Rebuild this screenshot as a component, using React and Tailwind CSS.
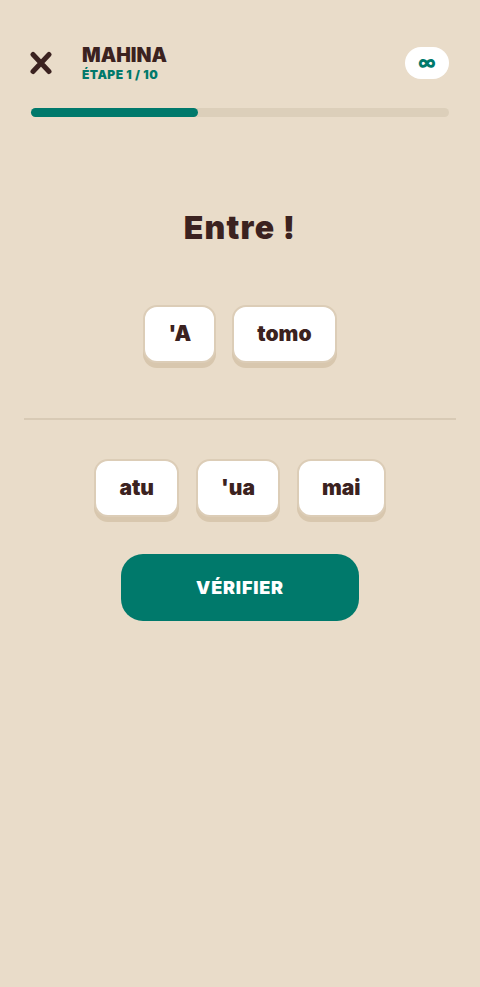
import React from "react";

function Tile({ children }) {
  return (
    <div className="rounded-[14px] border-2 border-[#dccdb7] bg-white px-[23px] h-[58px] flex items-center justify-center shadow-[0_5px_0_#d8c7ae] text-[21px] font-black text-[#3b2220]">
      {children}
    </div>
  );
}

export default function App() {
  return (
    <div className="min-h-[987px] w-full bg-[#e9dcc9] pt-[47px] font-['Inter',sans-serif]">
      <div className="flex h-8 items-center justify-between px-[30px]">
        <div className="flex items-center">
          <svg width="22" height="24" viewBox="0 0 22 24">
            <path d="M3 3.5 L19 20.5 M19 3.5 L3 20.5" stroke="#3b2220" strokeWidth="5" strokeLinecap="round" />
          </svg>
          <div className="ml-[30px] flex flex-col">
            <div className="text-[19.5px] leading-[23px] font-black text-[#3b2220]">MAHINA</div>
            <div className="text-[12px] leading-[15px] font-black tracking-[0.45px] text-[#00796b]">ÉTAPE 1 / 10</div>
          </div>
        </div>
        <div className="flex h-8 w-11 items-center justify-center rounded-full bg-white mr-[1px]">
          <span className="text-[17px] font-black leading-none text-[#00796b]">∞</span>
        </div>
      </div>

      <div className="mx-[31px] mt-[29px] h-[9px] rounded-full bg-[#dccfba]">
        <div className="h-full w-[40%] rounded-full bg-[#00796b]" />
      </div>

      <h1 className="mt-[91px] text-center text-[32px] leading-[40px] font-black tracking-[1.2px] text-[#3b2220]">Entre !</h1>

      <div className="mt-[57px] flex justify-center gap-4">
        <Tile>'A</Tile>
        <Tile>tomo</Tile>
      </div>

      <div className="mx-6 mt-[55px] h-[2px] bg-[#d8cab5]" />

      <div className="mt-[39px] flex justify-center gap-[17px]">
        <Tile>atu</Tile>
        <Tile>'ua</Tile>
        <Tile>mai</Tile>
      </div>

      <div className="mt-[37px] flex justify-center">
        <button className="h-[67px] w-[238px] rounded-[22px] bg-[#00796b] text-[18px] font-black tracking-[0.8px] text-white">
          VÉRIFIER
        </button>
      </div>
    </div>
  );
}
